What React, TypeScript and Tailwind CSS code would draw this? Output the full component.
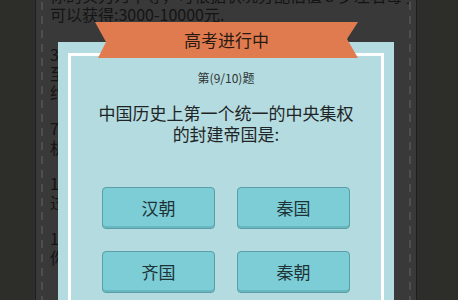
import React from "react";

const font = { fontFamily: '"Noto Sans CJK SC", "Noto Sans", sans-serif' };

function Dashes() {
  return (
    <div className="flex flex-col gap-[6px] pt-[2px]">
      {Array.from({ length: 22 }).map((_, i) => (
        <div key={i} className="h-[8px] w-[2px] bg-[#4e4e4e]" />
      ))}
    </div>
  );
}

const paragraphs: string[][] = [
  ["你的实力为中等，可根据状况分配估值５岁左右每小", "可以获得:3000-10000元."],
  ["3个月后如果表现良好，可以获得奖励，每月", "至少可以获得额外的收入，但要注意", "约定的时间不能太长，否则会有风险"],
  ["7月份是高考的时间，考试成绩决定未来", "机会，请认真对待每一道题目"],
  ["1、答对题目可以增加属性点，答错则", "过关失败，需要重新开始"],
  ["1、每道题只有一次机会，请仔细", "你的选择将影响最终结果"],
];

export default function App() {
  return (
    <div
      className="relative flex h-[300px] w-[458px] overflow-hidden bg-[#2d2e29]"
      style={font}
    >
      <div className="w-[35px] shrink-0" />
      <div className="flex h-full w-[382px] shrink-0 border-x border-[#1b2123] bg-[#393939]">
        <div className="ml-[5px] w-[2px]">
          <Dashes />
        </div>
        <div className="ml-[7px] mt-[-14px] flex flex-1 flex-col gap-[17px] overflow-hidden text-[16px] leading-[19px] text-[#141414]">
          {paragraphs.map((p, i) => (
            <div key={i} className={i === 1 ? "mt-[4px]" : ""}>
              {p.map((l, j) => (
                <div key={j} className="whitespace-nowrap">
                  {l}
                </div>
              ))}
            </div>
          ))}
        </div>
        <div className="mr-[5px] w-[2px]">
          <Dashes />
        </div>
      </div>
      <div className="flex-1" />

      {/* modal */}
      <div className="absolute left-[58px] top-[42px] h-[280px] w-[336px] bg-[#b4dbdf] px-[10px] pt-[11px]">
        <div className="flex h-full flex-col items-center border-[3px] border-white bg-[#b4dbdf] pt-[14px]">
          <div className="text-[12px] leading-[16px] text-[#2e3333]">第(9/10)题</div>
          <div className="mt-[16px] text-center text-[17px] leading-[21px] text-[#1e2526]">
            中国历史上第一个统一的中央集权
            <br />
            的封建帝国是:
          </div>
          <div className="mt-[43px] grid grid-cols-2 gap-x-[22px] gap-y-[22px]">
            {["汉朝", "秦国", "齐国", "秦朝"].map((t) => (
              <div
                key={t}
                className="flex h-[42px] w-[113px] items-center justify-center rounded-[4px] border border-[#5a9ea6] bg-[#7ccdd6] text-[17px] text-[#1e3336] shadow-[inset_0_-2px_0_#6bb7c0]"
              >
                {t}
              </div>
            ))}
          </div>
        </div>
      </div>

      {/* ribbon */}
      <div
        className="absolute left-[95px] top-[22px] flex h-[36px] w-[263px] items-center justify-center bg-[#e07b50] text-[17px] text-[#2b1a12]"
        style={{
          clipPath:
            "polygon(0 0, 100% 0, 252px 17px, 100% 100%, 3px 100%, 11px 20px)",
        }}
      >
        高考进行中
      </div>
    </div>
  );
}
